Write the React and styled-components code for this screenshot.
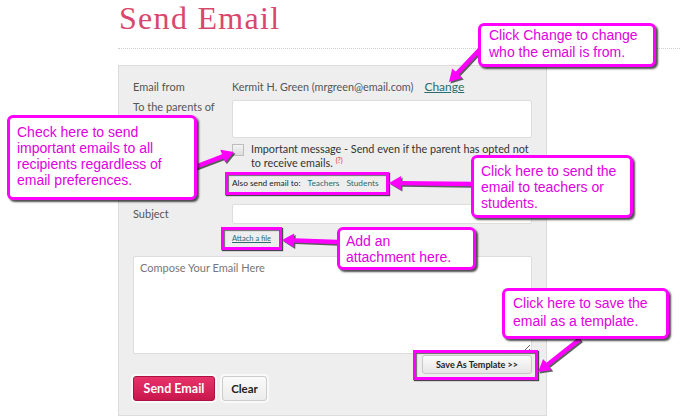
import React from 'react';
import styled, { createGlobalStyle } from 'styled-components';

const MAGENTA = '#ff00ff';
const CALLOUT_TEXT = '#e000e0';
const TEAL = '#2b6c6c';

const GlobalStyle = createGlobalStyle`
  html, body {
    margin: 0;
    padding: 0;
    background: #ffffff;
  }
  body {
    font-family: Lato, "Open Sans", sans-serif;
    color: #555;
  }
`;

const Page = styled.div`
  position: relative;
  width: 680px;
  height: 419px;
  overflow: hidden;
  padding-left: 118px;
  box-sizing: border-box;
`;

const Title = styled.h1`
  margin: 0;
  padding-left: 1px;
  font-family: "Liberation Serif", serif;
  font-weight: normal;
  font-size: 32px;
  line-height: 36px;
  letter-spacing: 1.3px;
  color: #d9476e;
`;

const Divider = styled.div`
  margin-top: 12px;
  border-top: 1px dotted #cfcfcf;
`;

const Panel = styled.div`
  margin-top: 16px;
  width: 429px;
  box-sizing: border-box;
  background: #eeeeee;
  border: 1px solid #dcdcdc;
  padding: 14px;
`;

const FormGrid = styled.div`
  display: grid;
  grid-template-columns: 99px 1fr;
  font-size: 11px;
  line-height: 14px;
`;

const Label = styled.div`
  grid-column: 1;
  color: #555;
  white-space: nowrap;
  margin-top: ${({ $top }) => $top || 0}px;
`;

const Field = styled.div`
  grid-column: 2;
  margin-top: ${({ $top }) => $top || 0}px;
  display: flex;
  align-items: ${({ $align }) => $align || 'center'};
`;

const FullRow = styled.div`
  grid-column: 1 / span 2;
  margin-top: ${({ $top }) => $top || 0}px;
  display: flex;
  justify-content: ${({ $justify }) => $justify || 'flex-start'};
  gap: 7px;
`;

const FromText = styled.span`
  color: #555;
  font-size: 10.8px;
`;

const ChangeLink = styled.a`
  margin-left: 11px;
  font-size: 12px;
  color: ${TEAL};
  text-decoration: underline;
`;

const Box = styled.div`
  width: 100%;
  height: ${({ $h }) => $h}px;
  box-sizing: border-box;
  background: #fff;
  border: 1px solid #dddddd;
  border-radius: 2px;
`;

const Checkbox = styled.span`
  flex: none;
  width: 12px;
  height: 12px;
  margin-top: 2px;
  box-sizing: border-box;
  border: 1px solid #bdbdbd;
  background: linear-gradient(#f4f4f4, #dcdcdc);
`;

const CheckText = styled.div`
  margin-left: 7px;
  color: #333;
  font-size: 10.8px;
  white-space: nowrap;
`;

const Hint = styled.span`
  position: relative;
  top: -4px;
  color: #e2262e;
  font-size: 7px;
  line-height: 0;
  margin-left: 3px;
`;

const Highlight = styled.div`
  display: inline-flex;
  align-items: center;
  line-height: 11px;
  border: 3px solid ${MAGENTA};
  box-shadow: 1px 1px 1px rgba(0, 0, 0, 0.7), inset 1px 1px 1px rgba(0, 0, 0, 0.55);
  margin-left: ${({ $left }) => $left || 0}px;
  margin-right: ${({ $right }) => $right || 0}px;
  padding: ${({ $pad }) => $pad};
`;

const AlsoText = styled.span`
  font-size: 8.3px;
  color: #222;
  margin-right: 7px;
`;

const RecipientLink = styled.span`
  font-size: 8.3px;
  color: ${TEAL};
  & + & {
    margin-left: 7px;
  }
`;

const AttachLink = styled.a`
  font-size: 7.5px;
  color: ${TEAL};
  text-decoration: underline;
`;

const Compose = styled.textarea`
  display: block;
  width: 100%;
  height: 98px;
  box-sizing: border-box;
  border: 1px solid #dddddd;
  border-radius: 2px;
  padding: 4px 6px;
  resize: vertical;
  font-family: Lato, "Open Sans", sans-serif;
  font-size: 11px;
  color: #333;
  &::placeholder {
    color: #777;
  }
`;

const TemplateButton = styled.button`
  width: 110px;
  height: 19px;
  padding: 0;
  border: 1px solid #c8c8c8;
  border-radius: 3px;
  background: linear-gradient(#fbfbfb, #e6e6e6);
  font-family: Lato, "Open Sans", sans-serif;
  font-size: 9px;
  font-weight: bold;
  color: #222;
`;

const ActionButton = styled.button`
  width: ${({ $primary }) => ($primary ? 82 : 45)}px;
  height: 25px;
  padding: 0;
  border-radius: 3px;
  font-family: Lato, "Open Sans", sans-serif;
  font-weight: bold;
  font-size: ${({ $primary }) => ($primary ? 12.5 : 11.5)}px;
  box-shadow: 0 0 0 2px #f9f9f9;
  border: 1px solid ${({ $primary }) => ($primary ? '#ad1141' : '#cccccc')};
  color: ${({ $primary }) => ($primary ? '#ffffff' : '#222222')};
  background: ${({ $primary }) =>
    $primary ? 'linear-gradient(#e8336a, #c8174c)' : 'linear-gradient(#fafafa, #ececec)'};
`;

const Callout = styled.div`
  position: absolute;
  left: ${({ $x }) => $x}px;
  top: ${({ $y }) => $y}px;
  width: ${({ $w }) => $w}px;
  height: ${({ $h }) => $h}px;
  box-sizing: border-box;
  padding: ${({ $pad }) => $pad};
  background: #ffffff;
  border: 3px solid ${MAGENTA};
  border-radius: 6px;
  box-shadow: 2px 2px 2px rgba(0, 0, 0, 0.7);
  font-family: "Liberation Sans", Arial, sans-serif;
  font-size: 14px;
  line-height: ${({ $lh }) => $lh}px;
  color: ${CALLOUT_TEXT};
  z-index: 3;
`;

const ArrowLayer = styled.svg`
  position: absolute;
  left: 0;
  top: 0;
  width: 680px;
  height: 419px;
  pointer-events: none;
  z-index: 2;
`;

function arrowPoints(x1, y1, x2, y2, shaft = 2.2, headLen = 12, headW = 7) {
  const dx = x2 - x1;
  const dy = y2 - y1;
  const len = Math.hypot(dx, dy);
  const ux = dx / len;
  const uy = dy / len;
  const px = -uy;
  const py = ux;
  const bx = x2 - ux * headLen;
  const by = y2 - uy * headLen;
  const pts = [
    [x1 + px * shaft, y1 + py * shaft],
    [bx + px * shaft, by + py * shaft],
    [bx + px * headW, by + py * headW],
    [x2, y2],
    [bx - px * headW, by - py * headW],
    [bx - px * shaft, by - py * shaft],
    [x1 - px * shaft, y1 - py * shaft],
  ];
  return pts.map((p) => p.map((v) => v.toFixed(1)).join(',')).join(' ');
}

const Arrow = ({ from, to }) => (
  <g>
    <polygon
      points={arrowPoints(from[0] + 1.5, from[1] + 1.5, to[0] + 1.5, to[1] + 1.5)}
      fill="#2a2a2a"
      opacity="0.75"
    />
    <polygon points={arrowPoints(from[0], from[1], to[0], to[1])} fill={MAGENTA} />
  </g>
);

const arrows = [
  { from: [484, 45], to: [449, 82] },
  { from: [195, 167], to: [234, 152] },
  { from: [472, 184], to: [389, 183] },
  { from: [338, 242], to: [282, 240] },
  { from: [580, 339], to: [538, 372] },
];

const callouts = [
  { x: 478, y: 23, w: 178, h: 44, lh: 17, pad: '1px 8px', lines: ['Click Change to change', 'who the email is from.'] },
  {
    x: 7, y: 115, w: 190, h: 85, lh: 16, pad: '6px 7px',
    lines: ['Check here to send', 'important emails to all', 'recipients regardless of', 'email preferences.'],
  },
  { x: 471, y: 155, w: 162, h: 63, lh: 16, pad: '5px 7px', lines: ['Click here to send the', 'email to teachers or', 'students.'] },
  { x: 337, y: 227, w: 139, h: 43, lh: 16, pad: '3px 6px', lines: ['Add an', 'attachment here.'] },
  { x: 502, y: 288, w: 167, h: 51, lh: 18, pad: '3px 8px', lines: ['Click here to save the', 'email as a template.'] },
];

export default function App() {
  return (
    <Page>
      <GlobalStyle />
      <Title>Send Email</Title>
      <Divider />
      <Panel>
        <FormGrid>
          <Label>Email from</Label>
          <Field>
            <FromText>Kermit H. Green (mrgreen@email.com)</FromText>
            <ChangeLink>Change</ChangeLink>
          </Field>

          <Label $top={6}>To the parents of</Label>
          <Field $top={6}>
            <Box $h={38} />
          </Field>

          <Field $top={4} $align="flex-start">
            <Checkbox />
            <CheckText>
              Important message - Send even if the parent has opted not
              <br />
              to receive emails.<Hint>(?)</Hint>
            </CheckText>
          </Field>

          <Field $top={2}>
            <Highlight $left={-7} $pad="3px 7px 3px 4px">
              <AlsoText>Also send email to:</AlsoText>
              <RecipientLink>Teachers</RecipientLink>
              <RecipientLink>Students</RecipientLink>
            </Highlight>
          </Field>

          <Label $top={12}>Subject</Label>
          <Field $top={9}>
            <Box $h={20} />
          </Field>

          <Field $top={3}>
            <Highlight $left={-11} $pad="3px 8px">
              <AttachLink>Attach a file</AttachLink>
            </Highlight>
          </Field>

          <FullRow $top={6}>
            <Compose placeholder="Compose Your Email Here" />
          </FullRow>

          <FullRow $top={-4} $justify="flex-end">
            <Highlight $right={-6} $pad="2px 3px 3px 6px">
              <TemplateButton>Save As Template &gt;&gt;</TemplateButton>
            </Highlight>
          </FullRow>

          <FullRow $top={-4}>
            <ActionButton $primary>Send Email</ActionButton>
            <ActionButton>Clear</ActionButton>
          </FullRow>
        </FormGrid>
      </Panel>

      <ArrowLayer viewBox="0 0 680 419">
        {arrows.map((a, i) => (
          <Arrow key={i} from={a.from} to={a.to} />
        ))}
      </ArrowLayer>

      {callouts.map((c, i) => (
        <Callout key={i} $x={c.x} $y={c.y} $w={c.w} $h={c.h} $lh={c.lh} $pad={c.pad}>
          {c.lines.map((l, j) => (
            <div key={j}>{l}</div>
          ))}
        </Callout>
      ))}
    </Page>
  );
}
